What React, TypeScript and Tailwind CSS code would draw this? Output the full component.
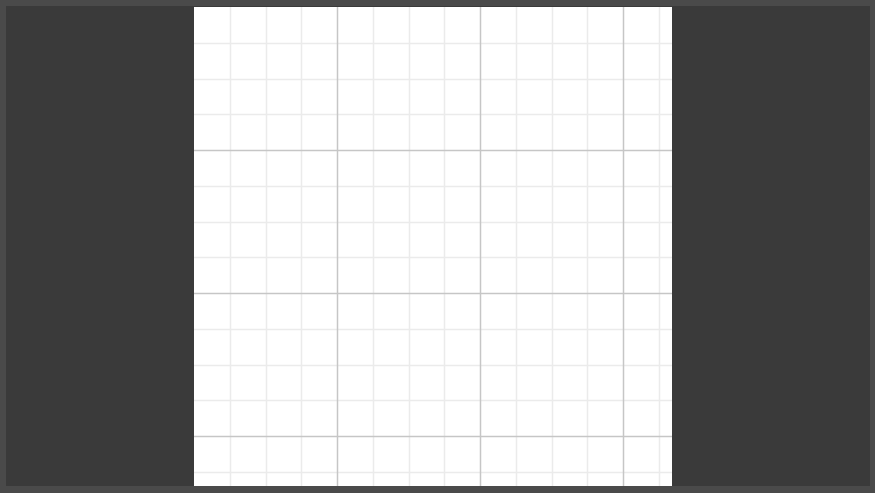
// Canvas editor view: dark workspace with a white gridded artboard.

const STEP = 35.75;
const W = 478;
const H = 479;

function Grid() {
  const xs: number[] = [];
  for (let k = 1; k * STEP < W; k++) xs.push(k);
  const ys: number[] = [];
  for (let k = 1; k * STEP < H; k++) ys.push(k);

  return (
    <svg width={W} height={H} className="block">
      {/* minor lines first, majors drawn over them */}
      {xs
        .filter((k) => k % 4 !== 0)
        .map((k) => (
          <line key={`vx${k}`} x1={Math.round(k * STEP) + 0.5} x2={Math.round(k * STEP) + 0.5} y1={0} y2={H} stroke="#ebebeb" strokeWidth={1.5} />
        ))}
      {ys
        .filter((k) => k % 4 !== 0)
        .map((k) => (
          <line key={`hy${k}`} y1={Math.round(k * STEP) + 0.5} y2={Math.round(k * STEP) + 0.5} x1={0} x2={W} stroke="#ebebeb" strokeWidth={1.5} />
        ))}
      {xs
        .filter((k) => k % 4 === 0)
        .map((k) => (
          <line key={`VX${k}`} x1={Math.round(k * STEP) + 0.5} x2={Math.round(k * STEP) + 0.5} y1={0} y2={H} stroke="#c6c6c6" strokeWidth={1.5} />
        ))}
      {ys
        .filter((k) => k % 4 === 0)
        .map((k) => (
          <line key={`HY${k}`} y1={Math.round(k * STEP) + 0.5} y2={Math.round(k * STEP) + 0.5} x1={0} x2={W} stroke="#c6c6c6" strokeWidth={1.5} />
        ))}
    </svg>
  );
}

export default function App() {
  return (
    <div className="w-[875px] h-[493px] bg-[#4a4a4a] pt-[6px] pl-[6px] pr-[5px] pb-[7px] overflow-hidden">
      <div className="h-full bg-[#3a3a3a] pl-[188px] pt-[1px]">
        <div className="w-[478px] h-[479px] bg-white">
          <Grid />
        </div>
      </div>
    </div>
  );
}
